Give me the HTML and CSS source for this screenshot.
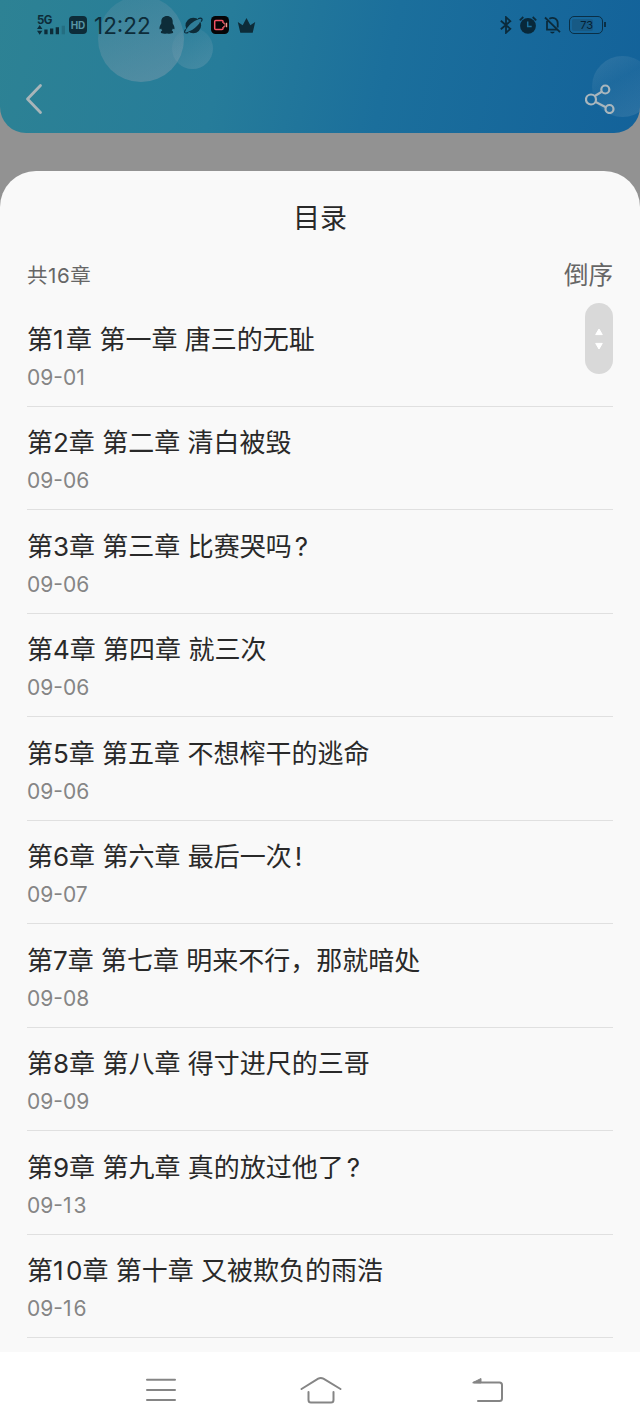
FILE: index.html
```
<!doctype html>
<html lang="zh-CN">
    <head>
        <meta charset="utf-8">
        <title>目录</title>
        <meta name="viewport" content="width=device-width, initial-scale=1">
        <link rel="stylesheet" href="styles.css">
    </head>
    <body>
        <div class="screen">
            <div class="header">
                <i class="bubble bubble-big"></i>
                <i class="bubble bubble-small"></i>
                <i class="bubble bubble-right"></i>

                <div class="status">
                    <div class="signal">
                        <span class="net">5G</span>
                        <svg width="28" height="10" viewBox="0 0 28 10">
                            <path d="M0 4l2.700-4 2.700 4zM0 5.800h5.400L2.700 9.800z"/>
                            <path d="M7.300 4.600h3.300v4.700H7.300zM13 3.600h3.300v5.700H13zM18.700 2.300H22v7h-3.300z"/>
                            <path d="M24.700.8H28v8.500h-3.300z" opacity=".22"/>
                        </svg>
                    </div>
                    <span class="hd">HD</span>
                    <span class="clock">12:22</span>
                    <svg class="ico-qq" width="16" height="18" viewBox="0 0 16 18">
                        <path d="M8 0C4.500 0 2.300 2.300 2.300 5.200v2.200C1.200 9 .3 10.800.5 12.700c.1.900.7.800 1.600-.1.200.8.600 1.400 1.200 2-.9.400-1.500.9-1.500 1.700 0 1.600 4.400 1.700 6.200 1.100 1.800.6 6.200.5 6.200-1.100 0-.8-.6-1.300-1.500-1.700.6-.6 1-1.200 1.200-2 .9.900 1.500 1 1.600.1.200-1.900-.7-3.700-1.800-5.300V5.200C13.700 2.300 11.500 0 8 0z"/>
                    </svg>
                    <svg class="ico-planet" width="19" height="17" viewBox="0 0 19 17">
                        <circle cx="9.300" cy="8.500" r="7.800"/>
                        <ellipse class="ring" cx="9.300" cy="8.500" rx="8.600" ry="2.900" transform="rotate(-39 9.300 8.500)"/>
                        <path class="line" d="M14 1.700c1.900-.7 3.400-.6 3.900.1.400.6.100 1.600-.8 2.900M1.700 12.300c-1 1.500-1.300 2.700-.9 3.200.5.700 1.800.6 3.600-.1"/>
                    </svg>
                    <svg class="ico-rec" width="18" height="18" viewBox="0 0 18 18">
                        <rect width="18" height="18" rx="4.500" fill="#050507"/>
                        <path d="M12 7V5.500Q12 4.500 11 4.500H4.700Q3.700 4.500 3.700 5.500v7q0 1 1 1H11q1 0 1-1V11" fill="none" stroke="#ef5365" stroke-width="1.500"/>
                        <path d="M12 7.200h2v3.600h-2" fill="none" stroke="#f06a72" stroke-width="1"/>
                        <path d="M15.600 6.800v4.400" stroke="#f09a8e" stroke-width="1.200"/>
                    </svg>
                    <svg class="ico-crown" width="19" height="15" viewBox="0 0 19 15">
                        <path d="M9.500 0l3.800 7.200L18.200 4l-2.500 10.700H3.300L.8 4l4.900 3.200z"/>
                    </svg>

                    <div class="status-right">
                        <svg width="12" height="18" viewBox="0 0 12 18">
                            <path class="line" d="M.8 4.700l9.500 8.100L6 16.800V1.200l4.300 4L.8 13.300"/>
                        </svg>
                        <svg class="ico-alarm" width="18" height="18" viewBox="0 0 18 18">
                            <circle cx="9" cy="9.800" r="7.900"/>
                            <path class="line" d="M.8 4.300L4.300 1M17.200 4.300L13.700 1"/>
                            <path d="M8.700 5.500v5h4" fill="none" stroke="#1b6f9c" stroke-width="1.500"/>
                        </svg>
                        <svg class="ico-bell" width="17" height="18" viewBox="0 0 17 18">
                            <path class="line" d="M1 1.500l15 14.700M3 5v8.600h10.400M5.300 2.700C9.500.4 13.700 3 13.700 7v4.500"/>
                            <path d="M6 15.800h4.800q-.5 1.800-2.400 1.800T6 15.800z"/>
                        </svg>
                        <div class="battery"><span class="level">73</span></div>
                    </div>
                </div>

                <div class="nav">
                    <svg width="18" height="32" viewBox="0 0 18 32">
                        <path d="M15.500 2.500L2.500 16l13 13.500" fill="none" stroke="#a9b5b9" stroke-width="2.800" stroke-linecap="round" stroke-linejoin="round"/>
                    </svg>
                    <svg width="30" height="30" viewBox="0 0 30 30" fill="none" stroke="#a9b6bd" stroke-width="2.200">
                        <circle cx="6" cy="15.500" r="5"/>
                        <circle cx="20.300" cy="5.500" r="4"/>
                        <circle cx="24.500" cy="25" r="4"/>
                        <path d="M9.800 12l7.400-4.500M10.700 18l10.200 5.200"/>
                    </svg>
                </div>
            </div>

            <div class="sheet">
                <h1>目录</h1>
                <div class="summary">
                    <span class="total">共16章</span>
                    <span class="order">倒序</span>
                </div>
                <ul class="chapters">
                    <li><h2>第<span class="one">1</span>章 第一章 唐三的无耻</h2><p>09-0<span class="one-small">1</span></p></li>
                    <li><h2>第2章 第二章 清白被毁</h2><p>09-06</p></li>
                    <li><h2>第3章 第三章 比赛哭吗<span class="mark">?</span></h2><p>09-06</p></li>
                    <li><h2>第4章 第四章 就三次</h2><p>09-06</p></li>
                    <li><h2>第5章 第五章 不想榨干的逃命</h2><p>09-06</p></li>
                    <li><h2>第6章 第六章 最后一次<span class="mark">!</span></h2><p>09-07</p></li>
                    <li><h2>第7章 第七章 明来不行，那就暗处</h2><p>09-08</p></li>
                    <li><h2>第8章 第八章 得寸进尺的三哥</h2><p>09-09</p></li>
                    <li><h2>第9章 第九章 真的放过他了<span class="mark">?</span></h2><p>09-<span class="one-small">1</span>3</p></li>
                    <li><h2>第<span class="one">1</span>0章 第十章 又被欺负的雨浩</h2><p>09-<span class="one-small">1</span>6</p></li>
                </ul>
                <div class="scroller">
                    <svg width="8" height="22" viewBox="0 0 8 22">
                        <path d="M4 1l3.300 5.600H.7zM4 21l3.300-5.600H.7z" fill="#fff" stroke="#fff" stroke-width="1" stroke-linejoin="round"/>
                    </svg>
                </div>
            </div>

            <div class="keys">
                <svg width="30" height="24" viewBox="0 0 30 24">
                    <path d="M1 1.700h28M1 11.900h28M1 21.900h28"/>
                </svg>
                <svg class="ico-home" width="42" height="28" viewBox="0 0 42 28">
                    <path d="M1.500 13L18.200 2.700q2.600-1.500 5.200 0L40.500 13M8.500 16v8q0 2.500 2.500 2.500h20q2.500 0 2.500-2.500v-8"/>
                </svg>
                <svg width="32" height="26" viewBox="0 0 32 26">
                    <path d="M2 5.500h25.500q2.500 0 2.500 2.500v13.500q0 2.500-2.500 2.500H6"/>
                    <path d="M1 5.500L9 1.500v4z" fill="#858585" stroke-width="1"/>
                </svg>
            </div>
        </div>
    </body>
</html>
```

FILE: styles.css
```
body {
    margin: 0;
    background: #929292;
    font-family: Inter, "Noto Sans CJK SC", sans-serif;
    color: #292929;
}

h1, h2, p, ul {
    margin: 0;
    padding: 0;
    font-weight: 400;
}

svg {
    display: block;
    flex: none;
}

.screen {
    display: flex;
    flex-direction: column;
    width: 640px;
    height: 1427px;
    overflow: hidden;
    background: #929292;
}

/* header */
.header {
    position: relative;
    flex: none;
    height: 133px;
    overflow: hidden;
    border-radius: 0 0 26px 26px;
    background: linear-gradient(102deg, #2d8294 0%, #267c9a 35%, #1b6f9c 60%, #13629a 100%);
}

.bubble {
    position: absolute;
    border-radius: 50%;
}

.bubble-big {
    left: 98px;
    top: -4px;
    width: 86px;
    height: 86px;
    background: linear-gradient(160deg, rgba(150,165,180,.12), rgba(150,165,180,.4));
}

.bubble-small {
    left: 172px;
    top: 28px;
    width: 41px;
    height: 41px;
    background: linear-gradient(150deg, rgba(150,175,190,.03), rgba(150,175,190,.28));
}

.bubble-right {
    left: 592px;
    top: 56px;
    width: 61px;
    height: 61px;
    background: linear-gradient(150deg, rgba(150,180,200,.2), rgba(150,180,200,.08) 40%, rgba(150,180,200,.2));
}

.status {
    position: relative;
    display: flex;
    align-items: center;
    height: 50px;
    padding: 0 34px 0 37px;
    color: #0d2c39;
    fill: #0d2c39;
}

.status .line {
    fill: none;
    stroke: #0b2b3c;
    stroke-width: 1.8;
}

.status .ring {
    fill: #2f7d98;
}

.ico-planet .line {
    stroke-width: 1.2;
}

.signal {
    width: 28px;
}

.net {
    display: block;
    font-size: 11.5px;
    line-height: 10px;
    font-weight: 700;
    letter-spacing: -.5px;
}

.hd {
    width: 18px;
    height: 18px;
    margin-left: 4px;
    border-radius: 4px;
    background: #0d2c39;
    color: #5795a5;
    font-size: 10px;
    line-height: 18px;
    font-weight: 700;
    text-align: center;
}

.clock {
    width: 58px;
    margin-left: 7px;
    font-size: 22.5px;
    white-space: nowrap;
}

.ico-qq {
    margin-left: 7px;
}

.ico-planet {
    margin-left: 9px;
}

.ico-rec {
    margin-left: 8px;
}

.ico-crown {
    margin-left: 8px;
}

.status-right {
    display: flex;
    align-items: center;
    margin-left: auto;
    fill: #08283a;
}

.ico-alarm {
    margin-left: 7px;
}

.ico-bell {
    margin-left: 7px;
}

.battery {
    position: relative;
    box-sizing: border-box;
    width: 34px;
    height: 18px;
    margin: 0 3px 0 8px;
    padding: 2px;
    border: 1.5px solid #0a2f46;
    border-radius: 5px;
}

.battery:after {
    content: "";
    position: absolute;
    right: -4px;
    top: 5px;
    width: 2px;
    height: 5px;
    background: #0a2f46;
}

.level {
    display: block;
    width: 21px;
    height: 12px;
    border-radius: 2px;
    background: #175a85;
    color: #061f33;
    font-size: 11px;
    line-height: 12px;
    text-align: right;
}

.nav {
    position: relative;
    display: flex;
    align-items: center;
    justify-content: space-between;
    height: 32px;
    margin-top: 33px;
    padding: 0 25px;
}

/* chapter list */
.sheet {
    position: relative;
    box-sizing: border-box;
    flex: none;
    height: 1181px;
    margin-top: 38px;
    padding: 0 27px;
    overflow: hidden;
    border-radius: 36px 36px 0 0;
    background: #f9f9f9;
}

h1 {
    padding-top: 28px;
    font-size: 27px;
    line-height: 40px;
    text-align: center;
}

.summary {
    display: flex;
    align-items: center;
    justify-content: space-between;
    height: 30px;
    margin-top: 20px;
    color: #666;
}

.total {
    font-size: 20.5px;
    letter-spacing: .6px;
}

.order {
    padding-bottom: 2px;
    font-size: 24.5px;
}

.chapters {
    margin-top: 14px;
    list-style: none;
}

.chapters li {
    box-sizing: border-box;
    height: 103.5px;
    padding-top: 18.5px;
    border-bottom: 1px solid #e0e0e0;
}

h2 {
    font-size: 26px;
    line-height: 36px;
    white-space: nowrap;
}

.one {
    letter-spacing: 2.5px;
}

.one-small {
    letter-spacing: 2px;
}

.mark {
    margin-left: 3px;
}

.chapters p {
    margin-top: 5px;
    color: #858585;
    font-size: 21px;
    line-height: 30px;
}

.scroller {
    position: absolute;
    right: 27px;
    top: 132px;
    display: flex;
    align-items: center;
    justify-content: center;
    width: 28px;
    height: 71px;
    border-radius: 14px;
    background: #d9d9d9;
}

/* system keys */
.keys {
    display: flex;
    align-items: center;
    justify-content: space-between;
    height: 75px;
    padding: 0 136px 0 146px;
    background: #fff;
}

.keys svg {
    fill: none;
    stroke: #858585;
    stroke-width: 2;
    stroke-linecap: round;
    stroke-linejoin: round;
}

.keys .ico-home {
    margin-right: 7px;
}
```
